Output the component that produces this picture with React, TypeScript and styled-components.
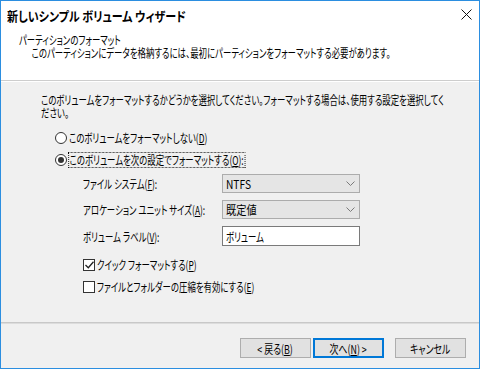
import React from 'react'
import styled, { createGlobalStyle } from 'styled-components'

const GlobalStyle = createGlobalStyle`
  html, body {
    margin: 0;
    padding: 0;
    background: #ffffff;
    overflow: hidden;
  }
  body {
    font-family: "Noto Sans CJK JP", "Noto Sans", sans-serif;
    font-size: 12px;
    color: #000000;
    font-feature-settings: "palt";
  }
  * {
    box-sizing: border-box;
  }
`

// Windows UI fonts have much narrower kana than Noto, so text runs are squeezed
const Txt = styled.span<{ $scale?: number; $origin?: string }>`
  display: inline-block;
  white-space: nowrap;
  transform: scaleX(${({ $scale }) => $scale ?? 0.7});
  transform-origin: ${({ $origin }) => $origin ?? 'left'} center;
`

const Line = styled(Txt)`
  display: block;
`

const Window = styled.div`
  width: 480px;
  height: 369px;
  border: 1px solid #2b8ee0;
  background: #f0f0f0;
  display: flex;
  flex-direction: column;
  overflow: hidden;
`

const TitleBar = styled.div`
  height: 29px;
  background: #ffffff;
  display: flex;
  align-items: center;
  justify-content: space-between;
  padding: 0 3px 1px 6px;
`

const Title = styled(Txt)`
  font-weight: bold;
  font-size: 13px;
`

const CloseButton = styled.div`
  width: 20px;
  height: 20px;
  display: flex;
  align-items: center;
  justify-content: center;
  margin-bottom: 2px;
`

const Header = styled.div`
  background: #ffffff;
  height: 51px;
  padding: 3px 0 0 18px;
  border-bottom: 1px solid #cdcdcd;
  line-height: 13px;
`

const HeaderSub = styled(Line)`
  padding-left: 18px;
`

const Body = styled.div`
  flex: 1;
  padding: 11px 20px 0 40px;
  border-top: 1px solid #ffffff;
`

const Intro = styled.div`
  line-height: 13px;
`

const Options = styled.div`
  display: flex;
  flex-direction: column;
  gap: 9px;
  margin-top: 12px;
  padding-left: 14px;
`

const RadioRow = styled.div`
  display: flex;
  align-items: center;
  gap: 2px;
  height: 13px;
`

const RadioDot = styled.span<{ $checked?: boolean }>`
  width: 12px;
  height: 12px;
  border-radius: 50%;
  border: 1px solid #333333;
  background: #ffffff;
  display: flex;
  align-items: center;
  justify-content: center;
  flex-shrink: 0;

  &::after {
    content: '';
    width: 6px;
    height: 6px;
    border-radius: 50%;
    background: ${({ $checked }) => ($checked ? '#333333' : 'transparent')};
  }
`

const FocusedLabel = styled(Txt)`
  outline: 1px dotted #000000;
  line-height: 14px;
  padding: 0 1px;
`

const Form = styled.div`
  display: grid;
  grid-template-columns: 139px 138px;
  row-gap: 7px;
  margin-top: 8px;
  padding-left: 42px;
  align-items: center;
`

const Select = styled.div`
  height: 19px;
  background: #e5e5e5;
  border: 1px solid #acacac;
  display: flex;
  align-items: center;
  justify-content: space-between;
  padding: 0 4px 0 3px;
`

const TextInput = styled.div`
  height: 20px;
  background: #ffffff;
  border: 1px solid #7a7a7a;
  display: flex;
  align-items: center;
  padding: 0 3px;
`

const Checks = styled.div`
  display: flex;
  flex-direction: column;
  gap: 9px;
  margin-top: 12px;
  padding-left: 42px;
`

const CheckRow = styled.div`
  display: flex;
  align-items: center;
  gap: 2px;
  height: 13px;
`

const CheckBox = styled.span`
  width: 12px;
  height: 12px;
  border: 1px solid #333333;
  background: #ffffff;
  display: flex;
  align-items: center;
  justify-content: center;
  flex-shrink: 0;
`

const Footer = styled.div`
  border-top: 1px solid #c8c8c8;
  box-shadow: inset 0 1px 0 #dcdcdc;
  height: 46px;
  display: flex;
  align-items: flex-start;
  justify-content: flex-end;
  padding: 15px 11px 0 0;
`

const Button = styled.div<{ $primary?: boolean; $gapAfter?: boolean }>`
  width: 71px;
  height: 20px;
  background: #e1e1e1;
  border: ${({ $primary }) => ($primary ? '2px solid #0078d7' : '1px solid #adadad')};
  display: flex;
  align-items: center;
  justify-content: center;
  margin-right: ${({ $gapAfter }) => ($gapAfter ? '11px' : '2px')};
`

const Key = styled.span`
  text-decoration: underline;
`

const Chevron = () => (
  <svg width='9' height='5' viewBox='0 0 9 5'>
    <path d='M0.5 0.5 L4.5 4.5 L8.5 0.5' fill='none' stroke='#7a7a7a' strokeWidth='1' />
  </svg>
)

const App = (): JSX.Element => {
  return (
    <>
      <GlobalStyle />
      <Window>
        <TitleBar>
          <Title $scale={0.85}>新しいシンプル ボリューム ウィザード</Title>
          <CloseButton>
            <svg width='11' height='11' viewBox='0 0 11 11'>
              <path d='M0.5 0.5 L10.5 10.5 M10.5 0.5 L0.5 10.5' stroke='#111111' strokeWidth='1' />
            </svg>
          </CloseButton>
        </TitleBar>
        <Header>
          <Line>パーティションのフォーマット</Line>
          <HeaderSub>このパーティションにデータを格納するには、最初にパーティションをフォーマットする必要があります。</HeaderSub>
        </Header>
        <Body>
          <Intro>
            <Line>このボリュームをフォーマットするかどうかを選択してください。フォーマットする場合は、使用する設定を選択してく</Line>
            <Line>ださい。</Line>
          </Intro>
          <Options>
            <RadioRow>
              <RadioDot />
              <Txt>このボリュームをフォーマットしない(<Key>D</Key>)</Txt>
            </RadioRow>
            <RadioRow>
              <RadioDot $checked />
              <FocusedLabel>このボリュームを次の設定でフォーマットする(<Key>O</Key>):</FocusedLabel>
            </RadioRow>
          </Options>
          <Form>
            <Txt>ファイル システム(<Key>F</Key>):</Txt>
            <Select>
              <Txt $scale={0.85}>NTFS</Txt>
              <Chevron />
            </Select>
            <Txt>アロケーション ユニット サイズ(<Key>A</Key>):</Txt>
            <Select>
              <Txt $scale={0.85}>既定値</Txt>
              <Chevron />
            </Select>
            <Txt>ボリューム ラベル(<Key>V</Key>):</Txt>
            <TextInput>
              <Txt>ボリューム</Txt>
            </TextInput>
          </Form>
          <Checks>
            <CheckRow>
              <CheckBox>
                <svg width='9' height='8' viewBox='0 0 9 8'>
                  <path d='M0.5 4 L3.3 6.8 L8.5 0.8' fill='none' stroke='#222222' strokeWidth='1.3' />
                </svg>
              </CheckBox>
              <Txt>クイック フォーマットする(<Key>P</Key>)</Txt>
            </CheckRow>
            <CheckRow>
              <CheckBox />
              <Txt>ファイルとフォルダーの圧縮を有効にする(<Key>E</Key>)</Txt>
            </CheckRow>
          </Checks>
        </Body>
        <Footer>
          <Button>
            <Txt $origin='center' $scale={0.74}>&lt; 戻る(<Key>B</Key>)</Txt>
          </Button>
          <Button $primary $gapAfter>
            <Txt $origin='center' $scale={0.74}>次へ(<Key>N</Key>) &gt;</Txt>
          </Button>
          <Button>
            <Txt $origin='center' $scale={0.74}>キャンセル</Txt>
          </Button>
        </Footer>
      </Window>
    </>
  )
}

export default App
